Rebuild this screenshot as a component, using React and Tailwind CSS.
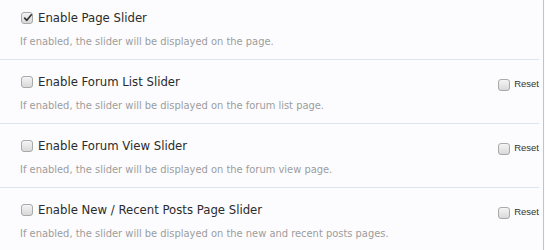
import React from "react";

function Box({ checked }) {
  return (
    <span className="relative inline-flex h-[12px] w-[12px] shrink-0 items-center justify-center rounded-[3px] border border-[#a9a9a9] bg-gradient-to-b from-[#f4f4f4] to-[#d9d9d9]">
      {checked && (
        <svg viewBox="0 0 12 12" className="absolute left-[1px] top-[0px] h-[10px] w-[10px]">
          <path d="M2 6.2 L4.6 8.8 L10 2.2" fill="none" stroke="#333" strokeWidth="2" strokeLinecap="round" strokeLinejoin="round" />
        </svg>
      )}
    </span>
  );
}

const rows = [
  { t: "Enable Page Slider", d: "If enabled, the slider will be displayed on the page.", checked: true, reset: false },
  { t: "Enable Forum List Slider", d: "If enabled, the slider will be displayed on the forum list page.", reset: true },
  { t: "Enable Forum View Slider", d: "If enabled, the slider will be displayed on the forum view page.", reset: true },
  { t: "Enable New / Recent Posts Page Slider", d: "If enabled, the slider will be displayed on the new and recent posts pages.", reset: true },
];

export default function App() {
  return (
    <div className="h-[250px] w-[545px] overflow-hidden bg-[#fcfcfe]" style={{ fontFamily: "Tahoma, 'DejaVu Sans Condensed', 'DejaVu Sans', sans-serif" }}>
      <div className="h-[250px] w-[544px] border-r border-[#b7c8c8]">
        <div className="w-[539px]">
          {rows.map((r, i) => (
            <div key={i} className={`flex justify-between ${i === 0 ? "pt-[11px]" : "border-t border-[#dbe7ef] pt-[15px]"} pb-[10px]`}>
              <div className="pl-[21px]">
                <div className="flex h-[13px] items-center gap-[5px]">
                  <Box checked={r.checked} />
                  <span className="text-[13px] leading-[13px] text-[#2b2b2b]">{r.t}</span>
                </div>
                <div className="-ml-[1px] mt-[11px] text-[11px] leading-[14px] text-[#9c9c9c]">{r.d}</div>
              </div>
              {r.reset && (
                <div className="flex h-[13px] items-center gap-[4px] pt-[6px]">
                  <Box />
                  <span className="text-[9.5px] text-[#333]" style={{ fontFamily: "'Liberation Sans', sans-serif" }}>Reset</span>
                </div>
              )}
            </div>
          ))}
        </div>
      </div>
    </div>
  );
}
